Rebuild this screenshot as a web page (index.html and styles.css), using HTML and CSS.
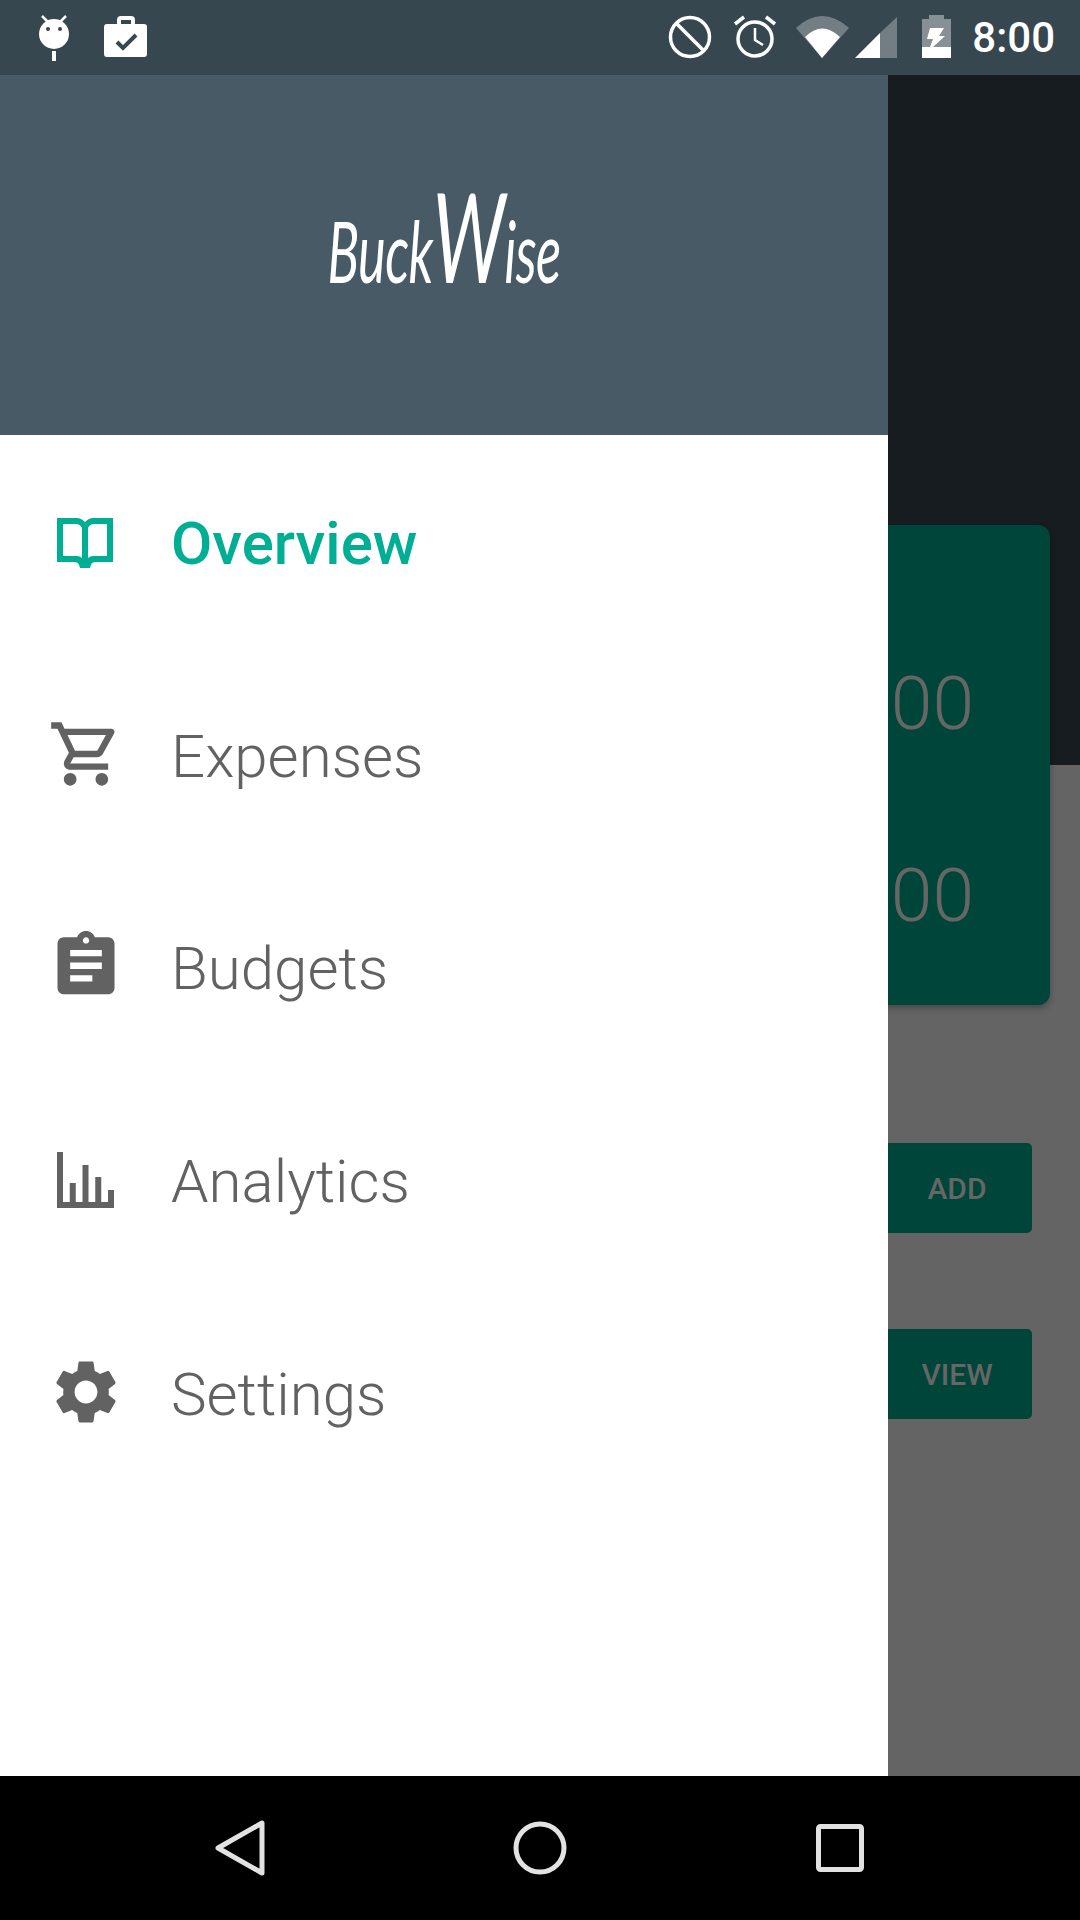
FILE: index.html
```html
<!DOCTYPE html>
<html lang="en">
<head>
  <meta charset="UTF-8">
  <title>BuckWise</title>
  <link rel="stylesheet" href="styles.css">
</head>
<body>
  <div class="status-bar">
    <div class="status-left">
      <svg class="bug-icon" viewBox="36 0 36 75">
        <circle cx="54" cy="34" r="15" fill="#fff"/>
        <path d="M42 16l6 6M66 16l-6 6" stroke="#fff" stroke-width="2.5"/>
        <circle cx="48" cy="29" r="2" fill="#37474f"/>
        <circle cx="60" cy="29" r="2" fill="#37474f"/>
        <rect x="52" y="51" width="4" height="10" fill="#fff"/>
      </svg>
      <svg class="case-icon" viewBox="104 0 44 75">
        <path fill="#fff" fill-rule="evenodd" d="M121 24v-4h10v4zM117 24v-4q0-4 4-4h10q4 0 4 4v4h9q3 0 3 3v27q0 3-3 3h-37q-3 0-3-3v-27q0-3 3-3z"/>
        <path d="M117 42l6 6 13-13" fill="none" stroke="#37474f" stroke-width="4"/>
      </svg>
    </div>
    <div class="status-right">
      <svg class="block-icon" viewBox="668 0 44 75">
        <circle cx="690" cy="37" r="19.5" fill="none" stroke="#fff" stroke-width="3.5"/>
        <path d="M676 23l28 28" stroke="#fff" stroke-width="3.5"/>
      </svg>
      <svg class="alarm-icon" viewBox="734 0 44 75">
        <circle cx="756" cy="39" r="17" fill="none" stroke="#fff" stroke-width="3.5"/>
        <path d="M736 24l9-7M776 24l-9-7" stroke="#fff" stroke-width="3.5"/>
        <path d="M756 28v12l8 5" fill="none" stroke="#fff" stroke-width="2.5"/>
      </svg>
      <svg class="wifi-icon" viewBox="796 0 56 75">
        <path fill="#fff" fill-opacity="0.3" d="M797 28Q823 4 850 28L823 58z"/>
        <path fill="#fff" d="M806 37Q823 20 841 37L823 58z"/>
      </svg>
      <svg class="signal-icon" viewBox="855 0 44 75">
        <path fill="#fff" fill-opacity="0.3" d="M881 33L898 17V58H881z"/>
        <path fill="#fff" d="M856 58L881 33V58z"/>
      </svg>
      <svg class="battery-icon" viewBox="922 0 31 75">
        <path fill="#fff" fill-opacity="0.4" d="M930 15h15v4h7v28h-29V19h7z"/>
        <path fill="#fff" d="M923 47h29v11h-29zM931 28h14l-5 8h6l-12 11h-3l3-8h-6z"/>
      </svg>
      <span class="status-time">8:00</span>
    </div>
  </div>

  <div class="screen">
    <div class="app">
      <div class="app-hero"></div>
      <div class="summary-card">
        <div class="summary-value">00</div>
        <div class="summary-value">00</div>
      </div>
      <div class="app-action"><span>ADD</span></div>
      <div class="app-action"><span>VIEW</span></div>
    </div>

    <div class="drawer">
      <div class="drawer-header">
        <span class="brand">Buck<span class="brand-w">W</span>ise</span>
      </div>
      <ul class="menu">
        <li class="menu-item active">
          <svg class="menu-icon" viewBox="0 -2 76 76">
            <path fill="currentColor" fill-rule="evenodd" d="M9 13H29Q33 13 37 17Q41 13 45 13H65V57H47Q43 57 42 63H32Q31 57 27 57H9ZM15 19V51H29Q32 51 34 53V23Q32 19 28 19ZM59 19V51H45Q42 51 40 53V23Q42 19 46 19Z"/>
          </svg>
          <span class="menu-label">Overview</span>
        </li>
        <li class="menu-item">
          <svg class="menu-icon" viewBox="0 0 24 24">
            <path fill="currentColor" d="M15.55 13c.75 0 1.41-.41 1.75-1.03l3.58-6.47c.37-.66-.11-1.5-.87-1.5H5.21l-.94-2H1v2h2l3.6 7.59-1.35 2.44C4.52 15.37 5.48 17 7 17h12v-2H7l1.1-2h7.45zM6.16 6h12.15l-2.76 5H8.53L6.16 6zM7 18c-1.1 0-1.99.9-1.99 2S5.9 22 7 22s2-.9 2-2-.9-2-2-2zm10 0c-1.1 0-1.99.9-1.99 2s.89 2 1.99 2 2-.9 2-2-.9-2-2-2z"/>
          </svg>
          <span class="menu-label">Expenses</span>
        </li>
        <li class="menu-item">
          <svg class="menu-icon" viewBox="0 0.4 24 24">
            <path fill="currentColor" d="M19 3h-4.18C14.4 1.84 13.3 1 12 1c-1.3 0-2.4.84-2.82 2H5c-1.1 0-2 .9-2 2v14c0 1.1.9 2 2 2h14c1.1 0 2-.9 2-2V5c0-1.1-.9-2-2-2zm-7 0c.55 0 1 .45 1 1s-.45 1-1 1-1-.45-1-1 .45-1 1-1zm2 14H7v-2h7v2zm3-4H7v-2h10v2zm0-4H7V7h10v2z"/>
          </svg>
          <span class="menu-label">Budgets</span>
        </li>
        <li class="menu-item">
          <svg class="menu-icon" viewBox="0 -2 76 76">
            <path fill="currentColor" d="M9 8h6v50h6.75V39h6v19h6.75V21h6v37h6.75V33h6v25H60V46h6v18H9z"/>
          </svg>
          <span class="menu-label">Analytics</span>
        </li>
        <li class="menu-item">
          <svg class="menu-icon" viewBox="0 0 24 24">
            <path fill="currentColor" d="M19.14 12.94c.04-.3.06-.61.06-.94 0-.32-.02-.64-.07-.94l2.03-1.58c.18-.14.23-.41.12-.61l-1.92-3.32c-.12-.22-.37-.29-.59-.22l-2.39.96c-.5-.38-1.03-.7-1.62-.94l-.36-2.54c-.04-.24-.24-.41-.48-.41h-3.84c-.24 0-.43.17-.47.41l-.36 2.54c-.59.24-1.13.57-1.62.94l-2.39-.96c-.22-.08-.47 0-.59.22L2.74 8.87c-.12.21-.08.47.12.61l2.03 1.58c-.05.3-.09.63-.09.94s.02.64.07.94l-2.03 1.58c-.18.14-.23.41-.12.61l1.92 3.32c.12.22.37.29.59.22l2.39-.96c.5.38 1.03.7 1.62.94l.36 2.54c.05.24.24.41.48.41h3.84c.24 0 .44-.17.47-.41l.36-2.54c.59-.24 1.13-.56 1.62-.94l2.39.96c.22.08.47 0 .59-.22l1.92-3.32c.12-.22.07-.47-.12-.61l-2.01-1.58zM12 15.6c-1.98 0-3.6-1.62-3.6-3.6s1.62-3.6 3.6-3.6 3.6 1.62 3.6 3.6-1.62 3.6-3.6 3.6z"/>
          </svg>
          <span class="menu-label">Settings</span>
        </li>
      </ul>
    </div>
  </div>

  <div class="nav-bar">
    <svg class="nav-icon" viewBox="0 0 56 60">
      <path d="M50 5V55L6 30Z" fill="none" stroke="#e2e2e2" stroke-width="5" stroke-linejoin="round"/>
    </svg>
    <svg class="nav-icon" viewBox="0 0 56 60">
      <circle cx="28" cy="30" r="24" fill="none" stroke="#e2e2e2" stroke-width="5"/>
    </svg>
    <svg class="nav-icon" viewBox="0 0 56 60">
      <rect x="6.5" y="8.5" width="43" height="43" rx="2" fill="none" stroke="#e2e2e2" stroke-width="5"/>
    </svg>
  </div>
</body>
</html>
```

FILE: styles.css
```css
* { box-sizing: border-box; }
html, body { margin: 0; padding: 0; }
body { width: 1080px; height: 1920px; display: flex; flex-direction: column; overflow: hidden; font-family: Roboto, sans-serif; background: #646464; }

/* status bar */
.status-bar { height: 75px; flex: none; background: #37474f; display: flex; justify-content: space-between; padding: 0 25px 0 36px; }
.status-left, .status-right { display: flex; align-items: stretch; }
.status-bar svg { height: 75px; display: block; }
.bug-icon { width: 36px; }
.case-icon { width: 44px; margin-left: 32px; }
.block-icon { width: 44px; }
.alarm-icon { width: 44px; margin-left: 21px; }
.wifi-icon { width: 56px; margin-left: 18px; }
.signal-icon { width: 44px; margin-left: 3px; }
.battery-icon { width: 31px; margin-left: 23px; }
.status-time { color: #fff; font-size: 42px; font-weight: 500; line-height: 75px; margin-left: 20px; }

/* screen */
.screen { flex: 1; position: relative; overflow: hidden; }
.app { height: 100%; background: #646464; display: flex; flex-direction: column; align-items: flex-end; }
.app-hero { width: 100%; height: 690px; flex: none; background: #171c20; }
.summary-card {
  width: 400px; height: 480px; margin: -240px 30px 0 0;
  background: #00453a; border-radius: 12px;
  box-shadow: 0 3px 6px rgba(0,0,0,0.3);
  padding: 134px 76px 0 0;
  display: flex; flex-direction: column; gap: 104px; align-items: flex-end;
}
.summary-value { color: #666; font-size: 75px; font-weight: 300; line-height: 88px; }
.app-action {
  width: 300px; height: 90px; margin: 138px 48px 0 0;
  background: #00453a; border-radius: 5px;
  color: #666; font-size: 30px; font-weight: 500;
  display: flex; align-items: center; justify-content: flex-end;
}
.app-action span { width: 150px; text-align: center; }
.app-action + .app-action { margin-top: 96px; }

/* drawer */
.drawer { position: absolute; top: 0; left: 0; bottom: 0; width: 888px; background: #fff; display: flex; flex-direction: column; }
.drawer-header { height: 360px; flex: none; background: #475a65; display: flex; align-items: center; justify-content: center; padding-bottom: 26px; }
.brand { color: #fff; font-family: Lato, sans-serif; font-style: italic; font-weight: 400; font-size: 86px; line-height: 100px; letter-spacing: -1px; transform: scaleX(0.61); }
.brand-w { font-size: 124px; }

.menu { list-style: none; margin: 0; padding: 0; }
.menu-item { height: 212.75px; display: flex; align-items: center; gap: 47px; padding-left: 48px; color: #626262; font-size: 60px; font-weight: 300; }
.menu-item.active { color: #00ae94; font-weight: 500; }
.menu-icon { width: 76px; height: 76px; flex: none; display: block; }
.menu-label { margin-top: 4px; }

/* nav bar */
.nav-bar { height: 144px; flex: none; background: #000; display: flex; justify-content: space-between; align-items: center; padding: 0 212px; }
.nav-icon { width: 56px; height: 60px; display: block; }
```
